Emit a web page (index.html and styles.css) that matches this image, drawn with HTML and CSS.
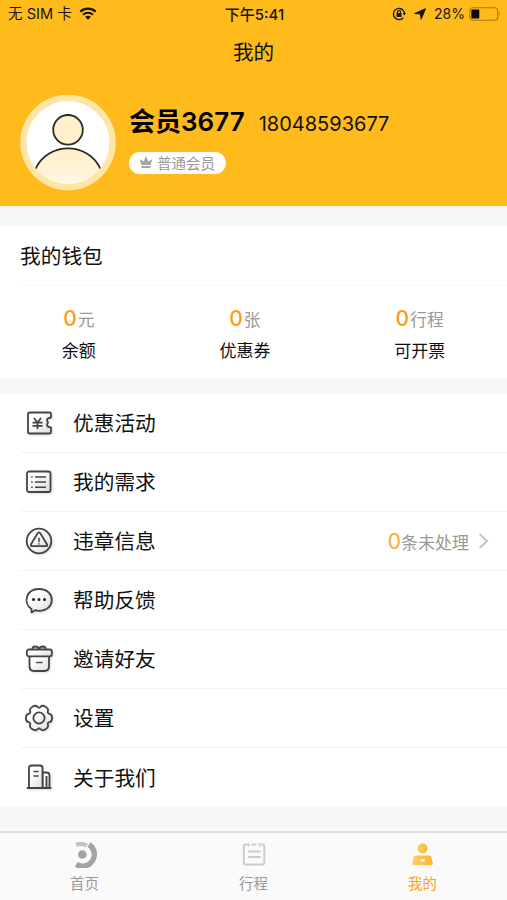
FILE: index.html
```html
<!DOCTYPE html>
<html lang="zh-CN">

<head>
    <meta charset="UTF-8">
    <meta name="viewport" content="width=device-width, initial-scale=1.0">
    <title>我的</title>
    <link rel="stylesheet" href="styles.css">
</head>

<body>
    <header class="header">
        <div class="status-bar">
            <div class="status-left">
                <span>无 SIM 卡</span>
                <svg class="wifi" width="18" height="13" viewBox="0 0 18 13">
                    <path d="M1.3 4.7C5.6.7 12.4.7 16.7 4.7" fill="none" stroke="#1a1508" stroke-width="2.2" />
                    <path d="M4 7.7c2.8-2.5 7.2-2.5 10 0" fill="none" stroke="#1a1508" stroke-width="2" />
                    <path d="M6 9.8c1.7-1.4 4.3-1.4 6 0l-3 3z" fill="#1a1508" />
                </svg>
            </div>
            <div class="status-time">下午5:41</div>
            <div class="status-right">
                <svg width="14" height="14" viewBox="0 0 14 14">
                    <path d="M11.6 3.8A5.6 5.6 0 1 0 11.4 10.6M11.6 3.8Q12.5 5 12.5 6.5" fill="none" stroke="#1a1508" stroke-width="1.3" />
                    <path d="M10.6 6h3.4l-1.7 2.6z" fill="#1a1508" />
                    <path d="M5.4 6.5V5.2a1.6 1.6 0 0 1 3.2 0v1.3" fill="none" stroke="#1a1508" stroke-width="1.1" />
                    <rect x="4.5" y="6" width="5" height="3.9" rx=".5" fill="#1a1508" />
                </svg>
                <svg class="arrow" width="12" height="12" viewBox="0 0 12 12">
                    <path d="M11.5.7 7.2 11.2 6.5 6 .7 5.5z" fill="#1a1508" stroke="#1a1508" stroke-width="1" stroke-linejoin="round" />
                </svg>
                <span class="percent">28%</span>
                <svg class="battery" width="32" height="14" viewBox="0 0 32 14">
                    <rect x=".7" y=".7" width="28" height="12.6" rx="3" fill="none" stroke="#a87a14" stroke-width="1.1" />
                    <rect x="2.3" y="2.5" width="8" height="9" rx="1" fill="#0d0a03" />
                    <path d="M30 4.8q1.6 2.2 0 4.4z" fill="#a87a14" />
                </svg>
            </div>
        </div>
        <h1 class="title">我的</h1>
        <div class="profile">
            <svg class="avatar" width="96" height="96" viewBox="0 0 96 96">
                <defs>
                    <linearGradient id="body" gradientUnits="userSpaceOnUse" x1="0" y1="53" x2="0" y2="90">
                        <stop offset="0" stop-color="#ffedc4" />
                        <stop offset="1" stop-color="#fff8e8" />
                    </linearGradient>
                    <clipPath id="face"><circle cx="48" cy="47.5" r="41.5" /></clipPath>
                </defs>
                <circle cx="48" cy="47.5" r="47.8" fill="#ffe5a6" />
                <circle cx="48" cy="47.5" r="41.5" fill="#fff" />
                <g clip-path="url(#face)">
                    <path d="M15.5 74C28 46.5 68 46.5 80.5 74L72 92H24z" fill="url(#body)" />
                    <path d="M15.5 74C28 46.5 68 46.5 80.5 74" fill="none" stroke="#2d2a28" stroke-width="1.8" />
                </g>
                <circle cx="48" cy="34.8" r="14.8" fill="#ffefcb" stroke="#2d2a28" stroke-width="1.8" />
            </svg>
            <div class="profile-info">
                <div class="name-row">
                    <span class="name">会员3677</span>
                    <span class="phone">18048593677</span>
                </div>
                <div class="level">
                    <svg width="14" height="13" viewBox="0 0 14 13">
                        <path d="M2.5 9 .6 3 4.5 5.5 7 .3 9.5 5.5 13.4 3 11.5 9zM2.5 10h9v2h-9z" fill="#a5a5a5" />
                    </svg>
                    <span>普通会员</span>
                </div>
            </div>
        </div>
    </header>

    <section class="wallet">
        <h2 class="wallet-title">我的钱包</h2>
        <div class="stats">
            <div class="stat">
                <div class="stat-value"><b>0</b>元</div>
                <div class="stat-label">余额</div>
            </div>
            <div class="stat">
                <div class="stat-value"><b>0</b>张</div>
                <div class="stat-label">优惠券</div>
            </div>
            <div class="stat">
                <div class="stat-value"><b>0</b>行程</div>
                <div class="stat-label">可开票</div>
            </div>
        </div>
    </section>

    <svg class="defs" width="0" height="0">
        <defs>
            <linearGradient id="shade" x1="0" y1="0" x2="1" y2="1">
                <stop offset=".3" stop-color="#fff" />
                <stop offset="1" stop-color="#dcdcdc" />
            </linearGradient>
        </defs>
    </svg>

    <ul class="menu">
        <li class="menu-item">
            <svg class="icon" viewBox="0 0 28 28">
                <path d="M4.5 3.5h20q1.5 0 1.5 1.5v3.500q-4 .5-4 2.500 0 1.300 1 2.500-1 1.200-1 2.500 0 2 4 2.500V23q0 1.500-1.500 1.500h-20Q3 24.500 3 23V5Q3 3.500 4.500 3.500z" />
                <path d="m9 9 3.500 4.500L16 9M7.500 13.700h10M7.500 16.800h10M12.500 13.500v6.500" />
            </svg>
            <span>优惠活动</span>
        </li>
        <li class="menu-item">
            <svg class="icon" viewBox="0 0 28 28">
                <rect x="2" y="3.5" width="23.5" height="20.5" rx="2" />
                <path class="thin" d="M10 9h11M10 14h11M10 19.2h11M6.200 9h1.500M6.200 14h1.500M6.200 19.200h1.500" />
            </svg>
            <span>我的需求</span>
        </li>
        <li class="menu-item">
            <svg class="icon" viewBox="0 0 28 28">
                <circle cx="14" cy="14" r="12.3" />
                <path d="M12.700 6.200q1.300-1.800 2.600 0l6.700 11q.8 2-1.200 2H7.200q-2 0-1.200-2z" />
                <path class="thin" d="M14 10.500v4.700M14 16.300v1.200" />
            </svg>
            <span>违章信息</span>
            <span class="extra"><em>0</em>条未处理</span>
            <svg class="chevron" width="11" height="16" viewBox="0 0 11 16">
                <path d="m1.5 1 7.5 7-7.5 7" />
            </svg>
        </li>
        <li class="menu-item">
            <svg class="icon" viewBox="0 0 28 28">
                <path d="M6.5 26.500v-3.500C-2 17.500.5 3 14 3c17 0 17 21.800 0 21.800q-2 0-3.800-.6z" />
                <path class="dots" d="M8.500 13.500h.01M14 13.500h.01M19.500 13.500h.01" />
            </svg>
            <span>帮助反馈</span>
        </li>
        <li class="menu-item">
            <svg class="icon" viewBox="0 0 28 28">
                <path d="M7.500 4.500q-.5-3 3-3 2.500 0 3.500 2.500 1-2.500 3.500-2.500 3.500 0 3 3" />
                <path d="M4.500 11v10q0 5 4.500 5h10.500q4.500 0 4.500-5V11z" />
                <rect x="1.8" y="4.500" width="25" height="6.800" rx="2" />
                <path class="thin" d="M11 17.500h6.500" />
            </svg>
            <span>邀请好友</span>
        </li>
        <li class="menu-item">
            <svg class="icon" viewBox="-14 -14 28 28">
                <path d="M13.07 0Q13.07 3.75 10.56 4.2Q8.05 4.65 8.915 7.05Q9.78 9.45 6.535 11.32Q3.29 13.2 1.645 11.25Q0 9.3-1.645 11.25Q-3.29 13.2-6.535 11.32Q-9.78 9.45-8.915 7.05Q-8.05 4.65-10.56 4.2Q-13.07 3.75-13.07 0Q-13.07-3.75-10.56-4.2Q-8.05-4.65-8.915-7.05Q-9.78-9.45-6.535-11.32Q-3.29-13.2-1.645-11.25Q0-9.3 1.645-11.25Q3.29-13.2 6.535-11.32Q9.78-9.45 8.915-7.05Q8.05-4.65 10.56-4.2Q13.07-3.75 13.07 0z" />
                <circle cx="0" cy="0" r="5.6" />
            </svg>
            <span>设置</span>
        </li>
        <li class="menu-item">
            <svg class="icon" viewBox="0 0 28 28">
                <path d="M17.5 8.500h4q3 0 3 3V24h-7z" />
                <path d="M4 24V4q0-2.500 2.500-2.500H15q2.500 0 2.500 2.500v20z" />
                <path d="M1.800 24h24.500M21.500 12v11" />
                <path class="thin" d="M8.500 7.500h5M8.500 12h5" />
            </svg>
            <span>关于我们</span>
        </li>
    </ul>

    <nav class="tab-bar">
        <a class="tab">
            <svg width="28" height="28" viewBox="0 0 28 28">
                <path d="M5 4.8Q11 2.800 16 5.500" fill="none" stroke="#c4c4c4" stroke-width="4.2" />
                <path d="M18 4.600A11.200 11.200 0 0 1 5.200 24.300" fill="none" stroke="#a3a3a3" stroke-width="5.400" />
                <circle cx="11.3" cy="14.500" r="4.300" fill="#a3a3a3" />
            </svg>
            <span>首页</span>
        </a>
        <a class="tab">
            <svg width="28" height="28" viewBox="0 0 28 28">
                <path d="M7.500 4.500H6Q3.800 4.500 3.800 7v15.500q0 2 2 2h16.500q2 0 2-2V7q0-2.500-2-2.500h-1M11.500 4.500h5" fill="none" stroke="#ccc" stroke-width="1.9" />
                <path d="M8.500 3v3.500M19.700 3v3.500M8 11.500h12.500M8 17h12.500" fill="none" stroke="#ccc" stroke-width="1.9" />
            </svg>
            <span>行程</span>
        </a>
        <a class="tab active">
            <svg width="28" height="28" viewBox="0 0 28 28">
                <defs>
                    <linearGradient id="gold" x1="0" y1="0" x2="1" y2="0">
                        <stop offset="0" stop-color="#fbd06c" />
                        <stop offset="1" stop-color="#fab82c" />
                    </linearGradient>
                </defs>
                <circle cx="13.5" cy="8.500" r="5" fill="url(#gold)" />
                <path d="M6.800 15.500h13.400q1.700 0 2.100 1.700l1.500 6q.3 2-1.600 2H4.800q-2 0-1.600-2l1.500-6q.4-1.700 2.100-1.700z" fill="url(#gold)" />
                <rect x="11.500" y="19.300" width="4.200" height="2.200" rx="1" fill="#fff" />
            </svg>
            <span>我的</span>
        </a>
    </nav>
</body>

</html>
```

FILE: styles.css
```css
* {
    box-sizing: border-box;
}

body {
    margin: 0;
    height: 900px;
    display: flex;
    flex-direction: column;
    overflow: hidden;
    background: #f7f7f7;
    color: #111;
    font-family: Inter, "Noto Sans CJK SC", sans-serif;
}

svg {
    display: block;
    flex-shrink: 0;
}

.header {
    height: 206px;
    background: #ffbb1b;
}

.status-bar {
    height: 27px;
    padding: 0 6px 0 8px;
    display: grid;
    grid-template-columns: 1fr auto 1fr;
    align-items: center;
    font-size: 14.6px;
    line-height: 27px;
    color: #1a1508;
}

.status-left,
.status-right {
    display: flex;
    align-items: center;
}

.status-left span,
.status-time {
    padding-top: 2px;
    line-height: 25px;
}

.wifi {
    margin-left: 7px;
}

.status-time {
    font-size: 15px;
    font-weight: 500;
}

.status-right {
    justify-content: flex-end;
}

.arrow {
    margin: 0 8px;
}

.percent {
    font-size: 14px;
}

.battery {
    margin-left: 4px;
}

.title {
    margin: 0;
    height: 50px;
    line-height: 51px;
    text-align: center;
    font-size: 20.6px;
    font-weight: 400;
}

.profile {
    display: flex;
    padding: 18px 0 0 20px;
}

.profile-info {
    padding: 6px 0 0 13px;
}

.name-row {
    display: flex;
    align-items: baseline;
    height: 42px;
    line-height: 41px;
    white-space: nowrap;
}

.name {
    font-size: 26px;
    font-weight: 600;
    color: #000;
}

.phone {
    margin-left: 14px;
    font-size: 20px;
}

.level {
    display: flex;
    align-items: center;
    width: 97px;
    height: 22px;
    margin-top: 9px;
    padding-left: 10px;
    border-radius: 11px;
    background: #fff;
    color: #999;
    font-size: 14.5px;
    line-height: 23px;
}

.level svg {
    margin-right: 4px;
    margin-bottom: 2px;
}

.wallet {
    height: 152px;
    margin-top: 20px;
    background: #fff;
}

.wallet-title {
    margin: 0 0 0 20px;
    height: 60px;
    border-bottom: 1px solid #f8f8f8;
    font-size: 20.7px;
    font-weight: 400;
    line-height: 61px;
}

.stats {
    display: flex;
    justify-content: space-around;
    padding-top: 17px;
    text-align: center;
}

.stat-value {
    height: 32px;
    line-height: 32px;
    font-size: 16.8px;
    color: #999;
}

.stat-value b {
    margin-right: 1px;
    font-size: 21px;
    font-weight: 500;
    color: #ff9a16;
}

.stat-label {
    font-size: 17px;
    line-height: 32px;
}

.defs {
    position: absolute;
}

.menu {
    margin: 16px 0 0;
    padding: 0 0 0 20px;
    list-style: none;
    background: #fff;
}

.menu-item {
    display: flex;
    align-items: center;
    height: 59px;
    padding: 0 18px 0 5px;
    border-bottom: 1px solid #f3f3f3;
    font-size: 20.7px;
    line-height: 56px;
}

.menu-item span {
    padding-top: 2px;
}

.menu-item:last-child {
    border-bottom: none;
}

.icon {
    width: 28px;
    height: 28px;
    margin-right: 20px;
    fill: url(#shade);
    stroke: #444;
    stroke-width: 1.8;
    stroke-linejoin: round;
    filter: drop-shadow(1px 1px 1px #ddd);
}

.icon .thin {
    stroke-width: 1.4;
}

.icon .dots {
    stroke: #222;
    stroke-width: 3;
    stroke-linecap: round;
}

.menu-item .extra {
    margin-left: auto;
    font-size: 17px;
    color: #999;
}

.extra em {
    font-size: 21px;
    font-style: normal;
    color: #ffa62e;
}

.chevron {
    margin-left: 9px;
    fill: none;
    stroke: #c4c4c4;
    stroke-width: 2;
}

.tab-bar {
    display: flex;
    height: 69px;
    margin-top: auto;
    padding-top: 7px;
    border-top: 2px solid #e0e0e0;
    background: #fafafa;
}

.tab {
    flex: 1;
    display: flex;
    flex-direction: column;
    align-items: center;
    font-size: 14.4px;
    line-height: 31px;
    color: #999;
}

.tab.active {
    color: #ffa21a;
}
```
